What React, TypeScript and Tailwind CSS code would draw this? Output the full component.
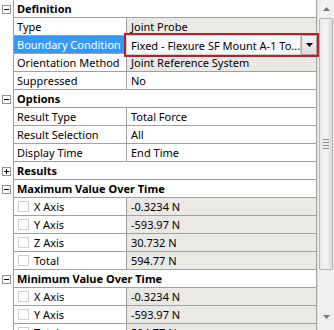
import React from "react";

type Row =
  | { kind: "header"; label: string; open: boolean }
  | { kind: "prop"; name: string; value: string; shaded?: boolean; check?: boolean; selected?: boolean; dropdown?: boolean };

const rows: Row[] = [
  { kind: "header", label: "Definition", open: true },
  { kind: "prop", name: "Type", value: "Joint Probe", shaded: true },
  { kind: "prop", name: "Boundary Condition", value: "Fixed - Flexure SF Mount A-1 To...", selected: true, dropdown: true },
  { kind: "prop", name: "Orientation Method", value: "Joint Reference System", shaded: true },
  { kind: "prop", name: "Suppressed", value: "No" },
  { kind: "header", label: "Options", open: true },
  { kind: "prop", name: "Result Type", value: "Total Force" },
  { kind: "prop", name: "Result Selection", value: "All" },
  { kind: "prop", name: "Display Time", value: "End Time" },
  { kind: "header", label: "Results", open: false },
  { kind: "header", label: "Maximum Value Over Time", open: true },
  { kind: "prop", name: "X Axis", value: "-0.3234 N", shaded: true, check: true },
  { kind: "prop", name: "Y Axis", value: "-593.97 N", shaded: true, check: true },
  { kind: "prop", name: "Z Axis", value: "30.732 N", shaded: true, check: true },
  { kind: "prop", name: "Total", value: "594.77 N", shaded: true, check: true },
  { kind: "header", label: "Minimum Value Over Time", open: true },
  { kind: "prop", name: "X Axis", value: "-0.3234 N", shaded: true, check: true },
  { kind: "prop", name: "Y Axis", value: "-593.97 N", shaded: true, check: true },
  { kind: "prop", name: "Total", value: "594.77 N", shaded: true, check: true },
];

const Expander = ({ open }: { open: boolean }) => (
  <div className="w-[9px] h-[9px] border border-[#919191] bg-white flex items-center justify-center relative">
    <div className="w-[5px] h-px bg-black" />
    {!open && <div className="absolute w-px h-[5px] bg-black" />}
  </div>
);

const Dropdown = ({ text }: { text: string }) => (
  <div className="absolute left-[-3px] top-[-3px] w-[195px] h-[24px] border-2 border-[#b8202a] bg-white z-10 flex items-center">
    <div className="flex-1 h-full flex items-center pl-[4px] border border-[#d0d0d0] bg-[#fbfbfb] overflow-hidden whitespace-nowrap">
      {text}
    </div>
    <div className="w-[16px] h-full border border-[#a8a8a8] bg-gradient-to-b from-[#f4f4f4] to-[#dedede] flex items-center justify-center">
      <svg width="7" height="4" viewBox="0 0 7 4">
        <path d="M0 0 L7 0 L3.5 4 Z" fill="#000" />
      </svg>
    </div>
  </div>
);

const Scrollbar = () => (
  <div className="w-[17px] h-full bg-[#f0f0f0] border-l border-[#e0e0e0] flex flex-col items-center">
    <div className="h-[18px] w-full flex items-center justify-center">
      <svg width="7" height="4" viewBox="0 0 7 4">
        <path d="M0 4 L7 4 L3.5 0 Z" fill="#777" />
      </svg>
    </div>
    <div className="w-[14px] h-[252px] rounded-[2px] border border-[#b4b4b4] bg-gradient-to-r from-[#e8e8e8] via-[#f6f6f6] to-[#d8d8d8] flex flex-col items-center justify-center gap-[2px]">
      <div className="w-[6px] h-px bg-[#8a8a8a]" />
      <div className="w-[6px] h-px bg-[#8a8a8a]" />
      <div className="w-[6px] h-px bg-[#8a8a8a]" />
      <div className="w-[6px] h-px bg-[#8a8a8a]" />
    </div>
    <div className="flex-1" />
    <div className="h-[18px] w-full flex items-start justify-center pt-[3px]">
      <svg width="7" height="4" viewBox="0 0 7 4">
        <path d="M0 0 L7 0 L3.5 4 Z" fill="#777" />
      </svg>
    </div>
  </div>
);

export default function App() {
  return (
    <div
      className="w-[334px] h-[330px] overflow-hidden bg-white flex text-[11px] text-black leading-none"
      style={{ fontFamily: '"Noto Sans", "Open Sans", sans-serif' }}
    >
      <div className="w-[317px] h-full flex flex-col">
        {rows.map((row, i) =>
          row.kind === "header" ? (
            <div key={i} className="h-[18px] shrink-0 flex">
              <div className="w-[14px] h-full border-r border-[#a0a0a0] flex items-center justify-center">
                <Expander open={row.open} />
              </div>
              <div className="flex-1 h-full border-b border-r border-[#a0a0a0] flex items-center pl-[3px] font-bold">
                {row.label}
              </div>
            </div>
          ) : (
            <div key={i} className="h-[18px] shrink-0 flex">
              <div className="w-[14px] h-full border-r border-[#a0a0a0]" />
              <div
                className={`w-[113px] h-full border-b border-r border-[#a0a0a0] flex items-center whitespace-nowrap overflow-hidden ${
                  row.selected ? "bg-[#3399ff] text-white" : "bg-white"
                } ${row.check ? "pl-[4px]" : "pl-[3px]"}`}
              >
                {row.check && (
                  <div className="w-[11px] h-[11px] border border-[#cfcfcf] bg-white mr-[5px] shrink-0" />
                )}
                {row.name}
              </div>
              <div
                className={`flex-1 h-full border-b border-r border-[#a0a0a0] flex items-center pl-[4px] relative whitespace-nowrap ${
                  row.shaded ? "bg-[#ebe9e5]" : "bg-white"
                }`}
              >
                {row.dropdown ? <Dropdown text={row.value} /> : row.value}
              </div>
            </div>
          )
        )}
      </div>
      <Scrollbar />
    </div>
  );
}
